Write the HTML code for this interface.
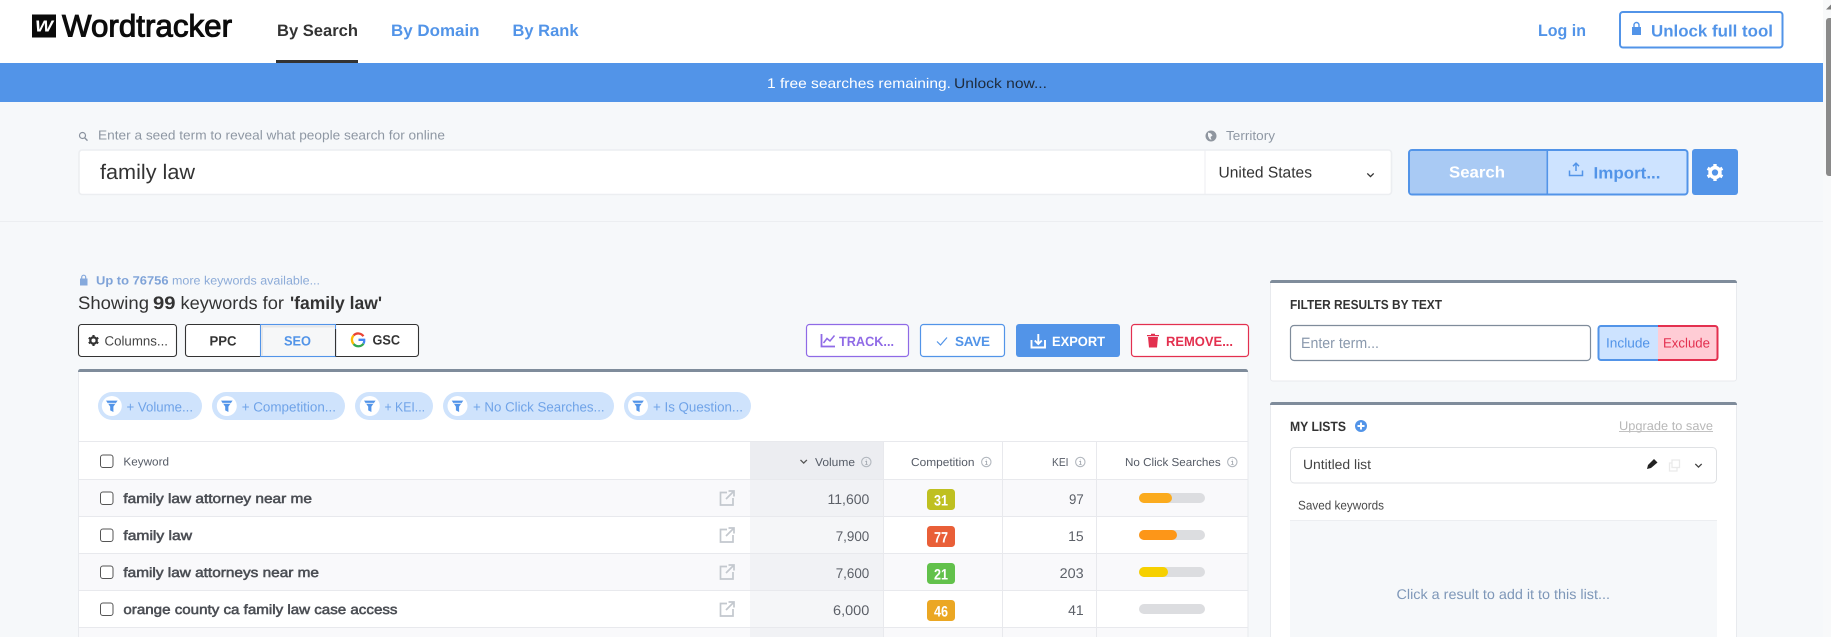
<!DOCTYPE html>
<html lang="en">
<head>
<meta charset="utf-8">
<title>Wordtracker</title>
<style>
html,body{margin:0;padding:0;width:1831px;height:637px;overflow:hidden;background:#f6f8fa}
svg{display:block}
text{font-family:"Liberation Sans",sans-serif;white-space:pre}
.b{font-weight:700}
.blue{fill:#5294e8}
.dk{fill:#333}
.chip{font-size:13.5px;fill:#6fa3e8}
.hd{font-size:11.5px;fill:#555b66}
.kw{font-size:13.5px;fill:#4c4f55;stroke:#4c4f55;stroke-width:.55px}
.num{font-size:14px;fill:#5c6068}
.bdg{font-size:15px;font-weight:700;fill:#fff}
.btn{font-size:13.5px;font-weight:700}
</style>
</head>
<body>
<svg xmlns="http://www.w3.org/2000/svg" width="1831" height="637" viewBox="0 0 1831 637" text-rendering="geometricPrecision">
<defs>
<g id="ext" fill="none" stroke="#c3c8ce" stroke-width="1.7"><path d="M8 2.5H1.5V15H14V8"/><path d="M7 9L14.5 1.5M9.5 1H15V6.5"/></g>
<g id="info"><circle cx="0" cy="0" r="4.7" fill="none" stroke="#b3b8bf" stroke-width="1.1"/><path d="M0-2.4V-1.6M-.9-.5H.3V2.3M-1 2.4H1.3" fill="none" stroke="#a4a9b1" stroke-width=".9"/></g>
<g id="cb"><rect x="0" y="0" width="12.5" height="12.5" rx="2.4" fill="#fff" stroke="#555" stroke-width="1"/></g>
<g id="fn"><circle cx="0" cy="0" r="10" fill="#fff"/><path d="M-5.8-5.4H5.8L1.6 .6V6L-1.600 4.400V.6Z" fill="#5294e8"/><path d="M-3.800-2.700H3.800" stroke="#fff" stroke-width=".9"/></g>
<g id="gear"><circle cx="0" cy="0" r="4.4" fill="none" stroke="currentColor" stroke-width="3.200"/><g stroke="currentColor" stroke-width="3"><path d="M0-7.600V-4.600M0 4.600V7.600M-6.600-3.800L-4-2.300M6.600 3.800L4 2.300M-6.600 3.800L-4 2.300M6.600-3.800L4-2.300"/></g></g>
<g id="chev"><path d="M-3.2-1.6L0 1.6L3.2-1.6" fill="none" stroke="currentColor" stroke-width="1.3"/></g>
</defs>

<!-- page -->
<rect width="1831" height="637" fill="#f6f8fa"/>

<!-- header -->
<rect width="1823" height="63" fill="#fff"/>
<rect x="32" y="14.500" width="24" height="23" fill="#0a0a0a"/>
<text x="35" y="31.500" font-size="16" font-weight="700" font-style="italic" fill="#fff" textLength="18" lengthAdjust="spacingAndGlyphs">W</text>
<text x="62" y="36.500" font-size="31" fill="#0c0c0c" stroke="#0c0c0c" stroke-width="1" textLength="170" lengthAdjust="spacingAndGlyphs">Wordtracker</text>
<text x="277" y="36" font-size="16.5" class="b dk" textLength="81" lengthAdjust="spacingAndGlyphs">By Search</text>
<rect x="276" y="60" width="82" height="3" fill="#333"/>
<text x="391" y="36" font-size="16.5" class="b blue" textLength="88.5" lengthAdjust="spacingAndGlyphs">By Domain</text>
<text x="512.5" y="36" font-size="16.5" class="b blue" textLength="66" lengthAdjust="spacingAndGlyphs">By Rank</text>
<text x="1538" y="36" font-size="16.5" class="b blue" textLength="48" lengthAdjust="spacingAndGlyphs">Log in</text>
<rect x="1620" y="12" width="162.5" height="35.5" rx="3" fill="#fff" stroke="#5294e8" stroke-width="2"/>
<path d="M1632 27V35H1641V27Z" fill="#5294e8"/><path d="M1634 27.500v-2.500a2.500 2.500 0 0 1 5 0V27.500" fill="none" stroke="#5294e8" stroke-width="1.400"/>
<text x="1651" y="36.500" font-size="16.5" class="b blue" textLength="122" lengthAdjust="spacingAndGlyphs">Unlock full tool</text>

<!-- banner -->
<rect y="63" width="1823" height="39" fill="#5294e8"/>
<text x="767" y="88" font-size="14" fill="#fff" textLength="184" lengthAdjust="spacingAndGlyphs">1 free searches remaining.</text>
<text x="954" y="88" font-size="14" fill="#1e2b3c" textLength="93" lengthAdjust="spacingAndGlyphs">Unlock now...</text>

<!-- search area -->
<rect y="221" width="1823" height="1" fill="#eceef1"/>
<circle cx="82.5" cy="135.5" r="3" fill="none" stroke="#8a929e" stroke-width="1.2"/><path d="M84.6 137.8L87.5 140.6" stroke="#8a929e" stroke-width="1.4"/>
<text x="98" y="139.5" font-size="13" fill="#8e97a3" textLength="347" lengthAdjust="spacingAndGlyphs">Enter a seed term to reveal what people search for online</text>
<rect x="79" y="150" width="1312.5" height="44.5" rx="3" fill="#fff" stroke="#eceef1" stroke-width="1.6"/>
<rect x="1204.5" y="150" width="1" height="44" fill="#eceef1"/>
<text x="100" y="179" font-size="21" fill="#333" textLength="95" lengthAdjust="spacingAndGlyphs">family law</text>
<circle cx="1211" cy="136" r="5.5" fill="#8f969f"/><path d="M1208 132.5l3 1 1.5 2-2 1.5 1 3-2-1-1.5-3Z" fill="#f6f8fa"/>
<text x="1226" y="140" font-size="13" fill="#8e97a3" textLength="49" lengthAdjust="spacingAndGlyphs">Territory</text>
<text x="1218.5" y="177.500" font-size="15.5" fill="#333" textLength="93.5" lengthAdjust="spacingAndGlyphs">United States</text>
<use href="#chev" x="1370.5" y="175" color="#333"/>
<rect x="1409" y="150" width="278.5" height="44.5" rx="3" fill="#cde3ff" stroke="#5294e8" stroke-width="2"/>
<path d="M1410 153a2 2 0 0 1 2-2H1547V193.500H1412a2 2 0 0 1-2-2Z" fill="#a9caf4"/>
<rect x="1546.500" y="150" width="1.600" height="44" fill="#5294e8"/>
<text x="1449" y="177.500" font-size="16" font-weight="700" fill="#fff" textLength="56" lengthAdjust="spacingAndGlyphs">Search</text>
<path d="M1569.500 170.500V175.500H1582.500V170.500M1576 171V163.500M1573 166.200L1576 163.200L1579 166.200" fill="none" stroke="#5294e8" stroke-width="1.500"/>
<text x="1593.500" y="178.500" font-size="16.500" class="b blue" textLength="67" lengthAdjust="spacingAndGlyphs">Import...</text>
<rect x="1692" y="149" width="46" height="46" rx="3" fill="#5294e8"/>
<g transform="translate(1715 172.500) scale(1.120)"><use href="#gear" color="#fff"/></g>

<!-- results heading -->
<path d="M80 278.500V285.500H87.500V278.500Z" fill="#85a9dc"/><path d="M81.700 279v-1.800a2 2 0 0 1 4 0V279" fill="none" stroke="#85a9dc" stroke-width="1.200"/>
<text x="96" y="284.500" font-size="12" font-weight="700" fill="#7fa3d8" textLength="72.500" lengthAdjust="spacingAndGlyphs">Up to 76756</text>
<text x="172" y="284.500" font-size="12" fill="#8cabd8" textLength="148" lengthAdjust="spacingAndGlyphs">more keywords available...</text>
<text x="78" y="309" font-size="18" fill="#333" textLength="71" lengthAdjust="spacingAndGlyphs">Showing</text>
<text x="153" y="309" font-size="18" font-weight="700" fill="#333" textLength="22.500" lengthAdjust="spacingAndGlyphs">99</text>
<text x="180.500" y="309" font-size="18" fill="#333" textLength="103.500" lengthAdjust="spacingAndGlyphs">keywords for</text>
<text x="290" y="309" font-size="18" font-weight="700" fill="#333" textLength="92" lengthAdjust="spacingAndGlyphs">'family law'</text>

<!-- toolbar left -->
<rect x="78.500" y="324.500" width="98" height="32" rx="3" fill="#fff" stroke="#333" stroke-width="1.100"/>
<g transform="translate(93.500 340.500) scale(.72)"><use href="#gear" color="#333"/></g>
<text x="104.500" y="345.500" font-size="13.500" fill="#444" textLength="63.500" lengthAdjust="spacingAndGlyphs">Columns...</text>
<rect x="185.500" y="324.500" width="233" height="32" rx="3" fill="#fff" stroke="#333" stroke-width="1.100"/>
<rect x="260.500" y="324.500" width="75" height="32" fill="#f6f7f8" stroke="#5294e8" stroke-width="1.100"/>
<path d="M261 326.500H335M262 325V356" stroke="#e6e7e9" stroke-width="2"/>
<rect x="335" y="329" width="1.100" height="27.500" fill="#333"/>
<text x="209.500" y="345.500" font-size="13.500" font-weight="700" fill="#333" textLength="27" lengthAdjust="spacingAndGlyphs">PPC</text>
<text x="284" y="345.500" font-size="13.500" class="b blue" textLength="27" lengthAdjust="spacingAndGlyphs">SEO</text>
<g fill="none" stroke-width="2.300">
<path d="M363.400 336.300A6.200 6.200 0 0 0 353.600 335.500" stroke="#e94335"/>
<path d="M353.600 335.500A6.200 6.200 0 0 0 353.600 344" stroke="#fbbc05"/>
<path d="M353.600 344A6.200 6.200 0 0 0 363.500 343.600" stroke="#34a853"/>
<path d="M363.500 343.600A6.200 6.200 0 0 0 364.200 339.800H358.500" stroke="#4285f4"/>
</g>
<text x="372.500" y="344.500" font-size="13.500" font-weight="700" fill="#333" textLength="27.500" lengthAdjust="spacingAndGlyphs">GSC</text>

<!-- toolbar right -->
<rect x="806.500" y="324.500" width="102" height="32" rx="3" fill="#fff" stroke="#8f6ae6" stroke-width="1.200"/>
<path d="M821.500 334V346.500H835" fill="none" stroke="#8f6ae6" stroke-width="1.800"/><path d="M823.500 343L827 338.500L830 341L834.500 335.500" fill="none" stroke="#8f6ae6" stroke-width="1.500"/>
<text x="839" y="346" class="btn" fill="#8f6ae6" textLength="55" lengthAdjust="spacingAndGlyphs">TRACK...</text>
<rect x="920.500" y="324.500" width="84" height="32" rx="3" fill="#fff" stroke="#5294e8" stroke-width="1.200"/>
<path d="M937 341.500L940.500 345L947 337.500" fill="none" stroke="#5294e8" stroke-width="1.200"/>
<text x="955" y="346" class="btn blue" textLength="35">SAVE</text>
<rect x="1016" y="324" width="104" height="33" rx="3" fill="#5294e8"/>
<path d="M1031.500 340V347.500H1045V340M1038.300 334V344M1034.800 340.500L1038.300 344L1041.800 340.500" fill="none" stroke="#fff" stroke-width="1.900"/>
<text x="1052" y="346" class="btn" fill="#fff" textLength="53" lengthAdjust="spacingAndGlyphs">EXPORT</text>
<rect x="1131.500" y="324.500" width="117" height="32" rx="3" fill="#fff" stroke="#e3304f" stroke-width="1.200"/>
<path d="M1148 337H1158L1157 347.500H1149ZM1147 335H1159V336.300H1147ZM1151 333.800H1155V335H1151Z" fill="#e3304f"/>
<text x="1166" y="346" class="btn" fill="#e3304f" textLength="67" lengthAdjust="spacingAndGlyphs">REMOVE...</text>

<!-- table panel -->
<rect x="78.500" y="370" width="1169.500" height="280" rx="2" fill="#fff" stroke="#e8eaee"/>
<path d="M78 372V371.500A2.500 2.500 0 0 1 80.500 369H1245.500A2.500 2.500 0 0 1 1248 371.500V372Z" fill="#7f8c9b"/>

<!-- chips -->
<g fill="#cfe3fc">
<rect x="98" y="392" width="104" height="28" rx="14"/>
<rect x="212" y="392" width="133" height="28" rx="14"/>
<rect x="355" y="392" width="78" height="28" rx="14"/>
<rect x="443" y="392" width="171" height="28" rx="14"/>
<rect x="624" y="392" width="127" height="28" rx="14"/>
</g>
<use href="#fn" x="111.800" y="406"/><use href="#fn" x="226.800" y="406"/><use href="#fn" x="369.800" y="406"/><use href="#fn" x="457.500" y="406"/><use href="#fn" x="638" y="406"/>
<text x="126.500" y="411.500" class="chip" textLength="66.500" lengthAdjust="spacingAndGlyphs">+ Volume...</text>
<text x="241.700" y="411.500" class="chip" textLength="94.300" lengthAdjust="spacingAndGlyphs">+ Competition...</text>
<text x="384.500" y="411.500" class="chip" textLength="40.500" lengthAdjust="spacingAndGlyphs">+ KEI...</text>
<text x="473" y="411.500" class="chip" textLength="131.600" lengthAdjust="spacingAndGlyphs">+ No Click Searches...</text>
<text x="653" y="411.500" class="chip" textLength="90" lengthAdjust="spacingAndGlyphs">+ Is Question...</text>

<!-- table rows -->
<rect x="79" y="479" width="1168.500" height="37" fill="#f9f9fb"/>
<rect x="79" y="553" width="1168.500" height="37" fill="#f9f9fb"/>
<rect x="79" y="627" width="1168.500" height="10" fill="#f9f9fb"/>
<rect x="750" y="441" width="133" height="38" fill="#ecedf1"/>
<rect x="750" y="479" width="133" height="37" fill="#f1f2f5"/>
<rect x="750" y="516" width="133" height="37" fill="#f5f6f8"/>
<rect x="750" y="553" width="133" height="37" fill="#f1f2f5"/>
<rect x="750" y="590" width="133" height="37" fill="#f5f6f8"/>
<rect x="750" y="627" width="133" height="10" fill="#f1f2f5"/>
<g fill="#e8e9ed">
<rect x="79" y="441" width="1168.500" height="1"/>
<rect x="79" y="479" width="1168.500" height="1"/>
<rect x="79" y="516" width="1168.500" height="1"/>
<rect x="79" y="553" width="1168.500" height="1"/>
<rect x="79" y="590" width="1168.500" height="1"/>
<rect x="79" y="627" width="1168.500" height="1"/>
<rect x="883" y="441" width="1" height="196"/>
<rect x="1002" y="441" width="1" height="196"/>
<rect x="1096" y="441" width="1" height="196"/>
</g>

<!-- table head -->
<use href="#cb" x="100.500" y="455"/>
<text x="123.400" y="465.500" font-size="11.500" fill="#555b66" textLength="45.600" lengthAdjust="spacingAndGlyphs">Keyword</text>
<use href="#chev" x="803.700" y="461.500" color="#555"/>
<text x="815" y="466" class="hd" textLength="40" lengthAdjust="spacingAndGlyphs">Volume</text><use href="#info" x="866.300" y="462"/>
<text x="911" y="466" class="hd" textLength="63.500" lengthAdjust="spacingAndGlyphs">Competition</text><use href="#info" x="986.300" y="462"/>
<text x="1052" y="466" class="hd" textLength="16.500" lengthAdjust="spacingAndGlyphs">KEI</text><use href="#info" x="1080.300" y="462"/>
<text x="1125" y="466" class="hd" textLength="95.700" lengthAdjust="spacingAndGlyphs">No Click Searches</text><use href="#info" x="1232.300" y="462"/>

<!-- row 1 -->
<use href="#cb" x="100.500" y="492"/>
<text x="123.400" y="503" class="kw" textLength="188.600" lengthAdjust="spacingAndGlyphs">family law attorney near me</text>
<use href="#ext" x="719" y="490"/>
<text x="869.300" y="504" class="num" text-anchor="end">11,600</text>
<rect x="927" y="489" width="28" height="21" rx="3.500" fill="#bfc021"/>
<text x="934" y="505.500" class="bdg" textLength="14" lengthAdjust="spacingAndGlyphs">31</text>
<text x="1069" y="504" class="num" textLength="14.700" lengthAdjust="spacingAndGlyphs">97</text>
<rect x="1139" y="493" width="66" height="10" rx="5" fill="#dcdde0"/>
<rect x="1139" y="493" width="33" height="10" rx="5" fill="#fbab1e"/>

<!-- row 2 -->
<use href="#cb" x="100.500" y="529"/>
<text x="123.400" y="540" class="kw" textLength="68.600" lengthAdjust="spacingAndGlyphs">family law</text>
<use href="#ext" x="719" y="527"/>
<text x="835.700" y="541" class="num" textLength="33.600" lengthAdjust="spacingAndGlyphs">7,900</text>
<rect x="927" y="526" width="28" height="21" rx="3.500" fill="#e95f38"/>
<text x="934" y="542.500" class="bdg" textLength="14" lengthAdjust="spacingAndGlyphs">77</text>
<text x="1083.700" y="541" class="num" text-anchor="end">15</text>
<rect x="1139" y="530" width="66" height="10" rx="5" fill="#dcdde0"/>
<rect x="1139" y="530" width="38" height="10" rx="5" fill="#fd9618"/>

<!-- row 3 -->
<use href="#cb" x="100.500" y="566"/>
<text x="123.400" y="577" class="kw" textLength="195.600" lengthAdjust="spacingAndGlyphs">family law attorneys near me</text>
<use href="#ext" x="719" y="564"/>
<text x="835.700" y="578" class="num" textLength="33.600" lengthAdjust="spacingAndGlyphs">7,600</text>
<rect x="927" y="563" width="28" height="21" rx="3.500" fill="#62c14b"/>
<text x="934" y="579.500" class="bdg" textLength="14" lengthAdjust="spacingAndGlyphs">21</text>
<text x="1059.700" y="578" class="num" textLength="24" lengthAdjust="spacingAndGlyphs">203</text>
<rect x="1139" y="567" width="66" height="10" rx="5" fill="#dcdde0"/>
<rect x="1139" y="567" width="29" height="10" rx="5" fill="#f6d000"/>

<!-- row 4 -->
<use href="#cb" x="100.500" y="603"/>
<text x="123.400" y="614" class="kw" textLength="274.100" lengthAdjust="spacingAndGlyphs">orange county ca family law case access</text>
<use href="#ext" x="719" y="601"/>
<text x="833" y="615" class="num" textLength="36.300" lengthAdjust="spacingAndGlyphs">6,000</text>
<rect x="927" y="600" width="28" height="21" rx="3.500" fill="#eba723"/>
<text x="934" y="616.500" class="bdg" textLength="14" lengthAdjust="spacingAndGlyphs">46</text>
<text x="1083.700" y="615" class="num" text-anchor="end">41</text>
<rect x="1139" y="604" width="66" height="10" rx="5" fill="#dcdde0"/>

<!-- filter panel -->
<rect x="1270.500" y="281" width="466" height="100" rx="2.500" fill="#fff" stroke="#e8eaee"/>
<path d="M1270 283V282.500A2.500 2.500 0 0 1 1272.500 280H1734.500A2.500 2.500 0 0 1 1737 282.500V283Z" fill="#7f8c9b"/>
<text x="1290" y="309" font-size="13" font-weight="700" fill="#333" textLength="152" lengthAdjust="spacingAndGlyphs">FILTER RESULTS BY TEXT</text>
<rect x="1290.500" y="325.500" width="300" height="35" rx="3.500" fill="#fff" stroke="#7f8c9b" stroke-width="1.200"/>
<text x="1301" y="348" font-size="15" fill="#8a99ad" textLength="78" lengthAdjust="spacingAndGlyphs">Enter term...</text>
<path d="M1658 325H1601A3 3 0 0 0 1598 328V358A3 3 0 0 0 1601 361H1658Z" fill="#cde3ff"/>
<path d="M1658 325H1715A3 3 0 0 1 1718 328V358A3 3 0 0 1 1715 361H1658Z" fill="#ffccd5"/>
<path d="M1658 326H1601A2.500 2.500 0 0 0 1598.500 328.500V357.500A2.500 2.500 0 0 0 1601 360H1658" fill="none" stroke="#5294e8" stroke-width="2"/>
<path d="M1658 326H1715A2.500 2.500 0 0 1 1717.500 328.500V357.500A2.500 2.500 0 0 1 1715 360H1658" fill="none" stroke="#e3304f" stroke-width="2"/>
<text x="1606" y="347.500" font-size="13.500" class="blue" textLength="44" lengthAdjust="spacingAndGlyphs">Include</text>
<text x="1663" y="347.500" font-size="13.500" fill="#e3304f" textLength="47" lengthAdjust="spacingAndGlyphs">Exclude</text>

<!-- lists panel -->
<rect x="1270.500" y="403" width="466" height="250" rx="2.500" fill="#fff" stroke="#e8eaee"/>
<path d="M1270 405V404.500A2.500 2.500 0 0 1 1272.500 402H1734.500A2.500 2.500 0 0 1 1737 404.500V405Z" fill="#7f8c9b"/>
<text x="1290" y="431" font-size="13.500" font-weight="700" fill="#333" textLength="56" lengthAdjust="spacingAndGlyphs">MY LISTS</text>
<circle cx="1361" cy="426" r="6" fill="#5294e8"/><path d="M1361 422.500V429.500M1357.500 426H1364.500" stroke="#fff" stroke-width="2"/>
<text x="1619" y="430" font-size="12.500" fill="#b8b8b8" textLength="94" lengthAdjust="spacingAndGlyphs">Upgrade to save</text>
<rect x="1619" y="431" width="94" height="1" fill="#c2c2c2"/>
<rect x="1290.500" y="447.500" width="426" height="35.500" rx="4" fill="#fff" stroke="#dfe1e4"/>
<text x="1303" y="469" font-size="13.500" fill="#444" textLength="68" lengthAdjust="spacingAndGlyphs">Untitled list</text>
<path d="M1647 469L1648 465L1654 459L1657.500 462.500L1651 468Z" fill="#222"/>
<g fill="none" stroke="#eaeaea" stroke-width="1.300"><rect x="1672" y="460" width="7.500" height="7.500"/><path d="M1672 463H1669.500V471H1677V467.500"/></g>
<use href="#chev" x="1698.500" y="465.500" color="#444"/>
<text x="1298" y="509.500" font-size="12.500" fill="#4a4a4a" textLength="86" lengthAdjust="spacingAndGlyphs">Saved keywords</text>
<rect x="1290" y="520" width="427" height="117" fill="#f6f8fa"/>
<rect x="1290" y="520" width="427" height="1" fill="#eceef1"/>
<text x="1396.500" y="599" font-size="14" fill="#7e97b8" textLength="213.500" lengthAdjust="spacingAndGlyphs">Click a result to add it to this list...</text>

<!-- scrollbar -->
<rect x="1823" width="8" height="637" fill="#f8f9fa"/>
<path d="M1826 9.500L1831 4.500V9.500Z" fill="#7e7e7e"/>
<path d="M1831 18H1829A3 3 0 0 0 1826 21V173A3 3 0 0 0 1829 176H1831Z" fill="#8a8a8a"/>
</svg>
</body>
</html>
